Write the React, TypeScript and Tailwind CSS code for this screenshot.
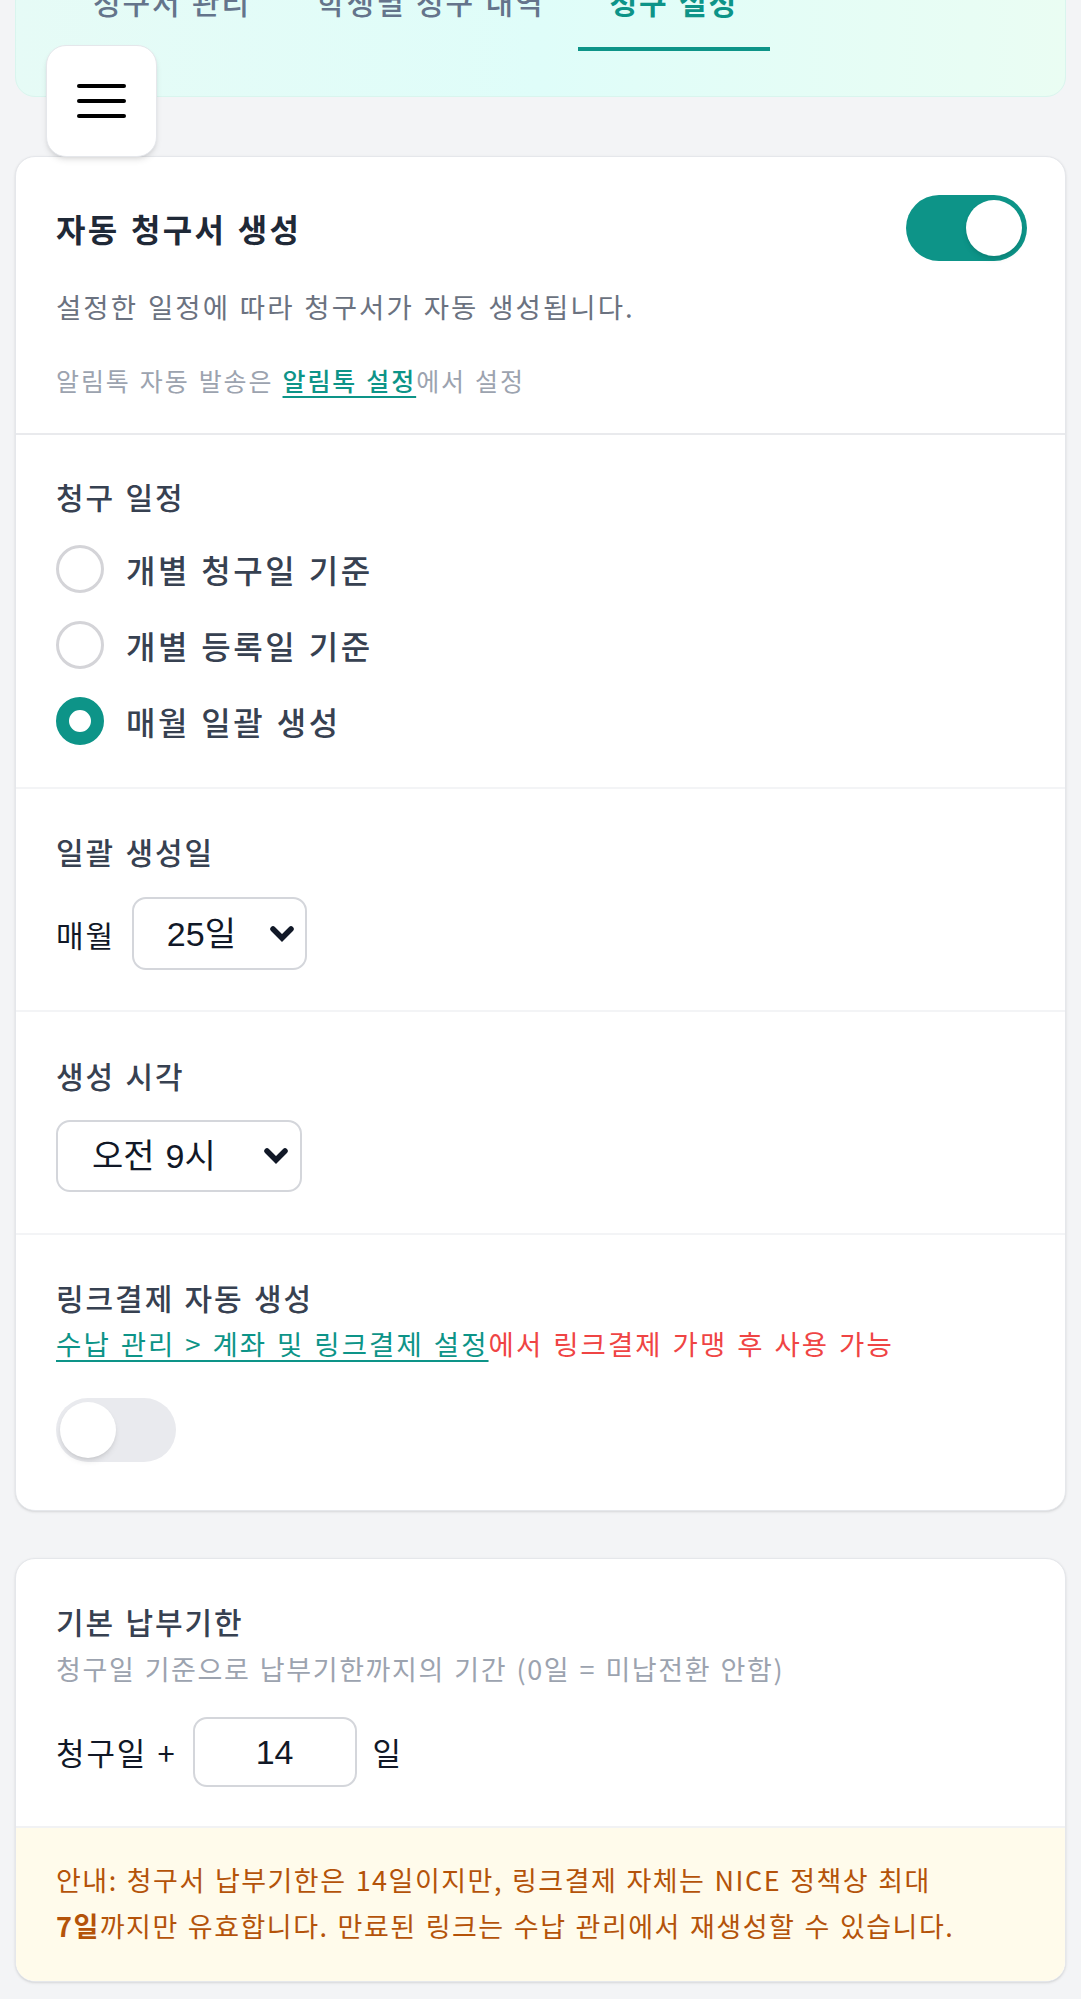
import React from "react";

function Chevron() {
  return (
    <svg width="26" height="18" viewBox="0 0 26 18" className="shrink-0">
      <polyline points="4,4 13,13 22,4" fill="none" stroke="#111827" strokeWidth="5.5" strokeLinecap="round" strokeLinejoin="miter" />
    </svg>
  );
}

function Radio({ checked, label }: { checked?: boolean; label: string }) {
  return (
    <div className="flex h-12 items-center gap-[22px]">
      {checked ? (
        <div className="h-12 w-12 shrink-0 rounded-full border-[13px] border-[#0d9488] bg-white" />
      ) : (
        <div className="h-12 w-12 shrink-0 rounded-full border-[3px] border-[#d4d4d8] bg-white" />
      )}
      <span className="text-[32px] font-medium leading-[48px] tracking-[0.08em] text-[#374151]">{label}</span>
    </div>
  );
}

export default function App() {
  return (
    <div className="min-h-screen bg-[#f3f4f6] font-['Noto_Sans_CJK_KR','Noto_Sans',sans-serif] [word-spacing:0.1em] pb-10">
      {/* header tabs card (scrolled partly out of view) */}
      <div className="mx-[15px] -mt-[49px] rounded-[20px] border border-[#d9f5ee] bg-gradient-to-r from-[#e6fbf6] via-[#dffdf9] to-[#eafdf3] pl-[44px] pt-[29px] pb-[45px]">
        <div className="flex">
          <div className="border-b-4 border-transparent px-[33px] pb-[26px] text-[30px] font-medium leading-[40px] tracking-[0.065em] text-[#64748b]">청구서 관리</div>
          <div className="border-b-4 border-transparent px-[33px] pb-[26px] text-[30px] font-medium leading-[40px] tracking-[0.065em] text-[#64748b]">학생별 청구 내역</div>
          <div className="border-b-4 border-[#0d9488] px-[32px] pb-[26px] text-[30px] font-bold leading-[40px] tracking-[0.065em] text-[#0d9488]">청구 설정</div>
        </div>
      </div>

      {/* floating menu button */}
      <button className="absolute left-[46px] top-[45px] flex h-[112px] w-[111px] flex-col items-center justify-center gap-[11px] rounded-[20px] border border-[#e5e7eb] bg-white shadow-md">
        <span className="block h-[4px] w-[49px] rounded-full bg-black" />
        <span className="block h-[4px] w-[49px] rounded-full bg-black" />
        <span className="block h-[4px] w-[49px] rounded-full bg-black" />
      </button>

      {/* main settings card */}
      <div className="mx-[15px] mt-[59px] overflow-hidden rounded-[20px] border border-[#e5e7eb] bg-white shadow-sm">
        {/* section 1 */}
        <div className="border-b-2 border-[#e9eaed] px-[40px] pt-[38px] pb-[36px]">
          <div className="flex h-[66px] items-center justify-between">
            <span className="text-[32px] font-bold leading-[44px] tracking-[0.075em] text-[#1f2937]">자동 청구서 생성</span>
            <div className="mr-[-2px] flex h-[66px] w-[121px] items-center justify-end rounded-full bg-[#0d9488] p-[5px]">
              <div className="h-[56px] w-[56px] rounded-full bg-white shadow-md" />
            </div>
          </div>
          <p className="mt-[27px] text-[27.5px] leading-[36px] tracking-[0.075em] text-[#6b7280]">설정한 일정에 따라 청구서가 자동 생성됩니다.</p>
          <p className="mt-[39px] text-[25px] leading-[34px] tracking-[0.076em] text-[#9ca3af]">
            알림톡 자동 발송은 <span className="font-medium text-[#0d9488] underline decoration-2 underline-offset-[5px]">알림톡 설정</span>에서 설정
          </p>
        </div>

        {/* section 2 */}
        <div className="border-b-2 border-[#f3f4f6] px-[40px] pt-[41px] pb-[42px]">
          <div className="text-[30px] font-medium leading-[40px] tracking-[0.065em] text-[#374151]">청구 일정</div>
          <div className="mt-[29px] flex flex-col gap-[28px]">
            <Radio label="개별 청구일 기준" />
            <Radio label="개별 등록일 기준" />
            <Radio checked label="매월 일괄 생성" />
          </div>
        </div>

        {/* section 3 */}
        <div className="border-b-2 border-[#f3f4f6] px-[40px] pt-[42px] pb-[40px]">
          <div className="text-[30px] font-medium leading-[40px] tracking-[0.065em] text-[#374151]">일괄 생성일</div>
          <div className="mt-[26px] flex items-center gap-[17px]">
            <span className="text-[30px] leading-[40px] tracking-[0.06em] text-[#111827]">매월</span>
            <div className="flex h-[73px] w-[175px] items-center justify-between rounded-[14px] border-2 border-[#d4d6db] bg-white pl-[33px] pr-[10px]">
              <span className="font-['Liberation_Sans','Noto_Sans_CJK_KR',sans-serif] text-[34px] leading-[40px] text-[#111827]">25일</span>
              <Chevron />
            </div>
          </div>
        </div>

        {/* section 4 */}
        <div className="border-b-2 border-[#f3f4f6] px-[40px] pt-[43px] pb-[41px]">
          <div className="text-[30px] font-medium leading-[40px] tracking-[0.065em] text-[#374151]">생성 시각</div>
          <div className="mt-[25px] flex h-[72px] w-[246px] items-center justify-between rounded-[14px] border-2 border-[#d4d6db] bg-white pl-[34px] pr-[11px]">
            <span className="font-['Liberation_Sans','Noto_Sans_CJK_KR',sans-serif] text-[34px] leading-[40px] text-[#111827]">오전 9시</span>
            <Chevron />
          </div>
        </div>

        {/* section 5 */}
        <div className="px-[40px] pt-[42px] pb-[48px]">
          <div className="text-[30px] font-medium leading-[40px] tracking-[0.065em] text-[#374151]">링크결제 자동 생성</div>
          <p className="mt-[8px] text-[27.5px] leading-[36px] tracking-[0.076em]">
            <span className="text-[#0d9488] underline decoration-2 underline-offset-[5px]">수납 관리 &gt; 계좌 및 링크결제 설정</span>
            <span className="text-[#ef4444]">에서 링크결제 가맹 후 사용 가능</span>
          </p>
          <div className="mt-[37px] flex h-[64px] w-[120px] items-center rounded-full bg-[#e9eaee] p-[4px]">
            <div className="h-[56px] w-[56px] rounded-full bg-white shadow-md" />
          </div>
        </div>
      </div>

      {/* due date card */}
      <div className="mx-[15px] mt-[47px] overflow-hidden rounded-[20px] border border-[#e5e7eb] bg-white shadow-sm">
        <div className="px-[40px] pt-[42px] pb-[39px]">
          <div className="text-[30px] font-medium leading-[40px] tracking-[0.065em] text-[#374151]">기본 납부기한</div>
          <p className="mt-[11px] text-[27px] leading-[34px] tracking-[0.06em] text-[#9ca3af]">청구일 기준으로 납부기한까지의 기간 (0일 = 미납전환 안함)</p>
          <div className="mt-[31px] flex items-center gap-[16px]">
            <span className="text-[31px] leading-[40px] tracking-[0.06em] text-[#111827]">청구일 +</span>
            <div className="flex h-[70px] w-[164px] items-center justify-center rounded-[14px] border-2 border-[#d4d6db] bg-white">
              <span className="font-['Liberation_Sans',sans-serif] text-[34px] leading-[40px] text-[#111827]">14</span>
            </div>
            <span className="text-[31px] leading-[40px] text-[#111827]">일</span>
          </div>
        </div>
        <div className="border-t-2 border-[#f1f2f4] bg-[#fffbeb] px-[40px] pt-[29px] pb-[32px]">
          <p className="break-keep text-[27px] leading-[46px] tracking-[0.055em] text-[#b45309]">
            안내: 청구서 납부기한은 14일이지만, 링크결제 자체는 NICE 정책상 최대 <span className="font-bold">7일</span>까지만 유효합니다. 만료된 링크는 수납 관리에서 재생성할 수 있습니다.
          </p>
        </div>
      </div>
    </div>
  );
}
